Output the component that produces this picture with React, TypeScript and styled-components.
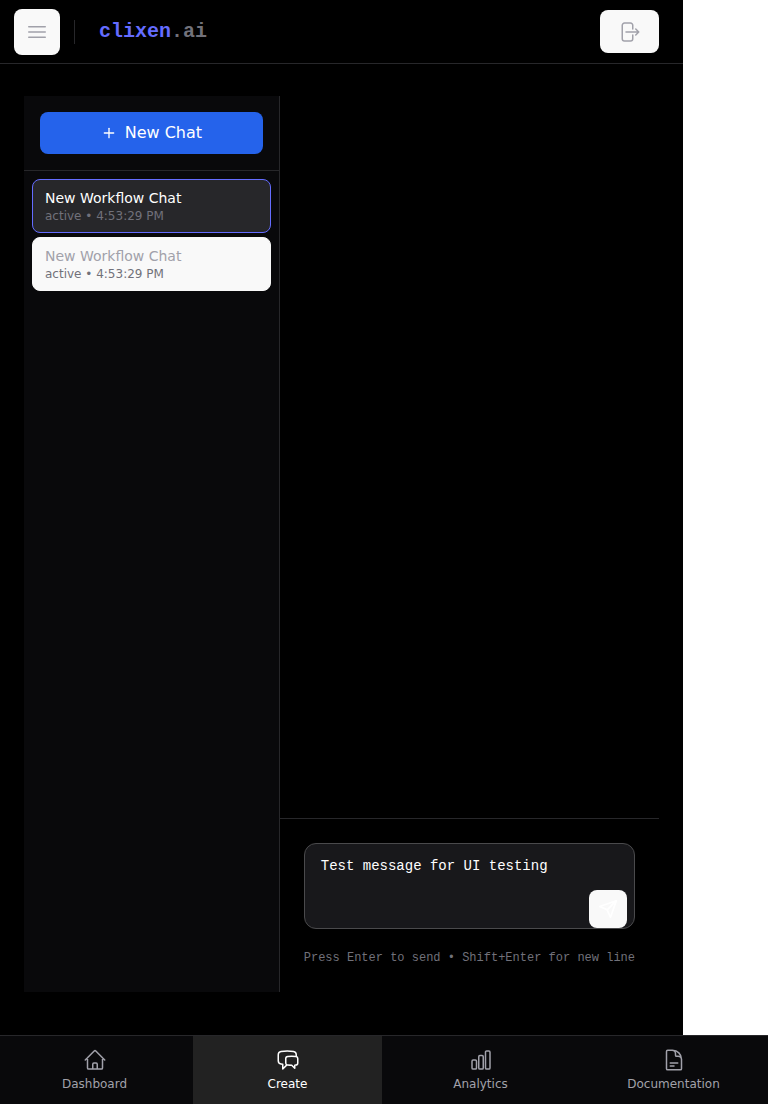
import React from 'react';
import styled, { createGlobalStyle } from 'styled-components';
import {
  HiOutlineArrowRightOnRectangle,
  HiOutlineBars3,
  HiOutlineChartBar,
  HiOutlineChatBubbleLeftRight,
  HiOutlineDocumentText,
  HiOutlineHome,
} from 'react-icons/hi2';
import { FiSend } from 'react-icons/fi';
import { Plus } from 'lucide-react';

const sans = `'DejaVu Sans', sans-serif`;
const mono = `'Liberation Mono', monospace`;

const GlobalStyle = createGlobalStyle`
  *, *::before, *::after { box-sizing: border-box; }
  body { margin: 0; background: #fff; font-family: ${sans}; }
  button { font: inherit; border: 0; margin: 0; padding: 0; cursor: pointer; }
  svg { display: block; flex: none; }
`;

const Screen = styled.div`
  display: flex;
  flex-direction: column;
  height: 1104px;
`;

const Workspace = styled.div`
  display: flex;
  flex-direction: column;
  flex: 1;
  width: 683px;
  background: #000;
`;

const Header = styled.header`
  display: flex;
  align-items: center;
  height: 64px;
  padding: 0 24px 0 14px;
  border-bottom: 1px solid #27272a;
`;

const IconButton = styled.button<{ $width: number; $height: number }>`
  display: flex;
  align-items: center;
  justify-content: center;
  width: ${(p) => p.$width}px;
  height: ${(p) => p.$height}px;
  border-radius: 8px;
  background: #f9f9f9;
  color: #a1a1aa;
`;

const LogoutButton = styled(IconButton)`
  padding-right: 1px;
`;

const Divider = styled.span`
  width: 1px;
  height: 24px;
  margin: 0 24px 0 14px;
  background: #27272a;
`;

const Logo = styled.div`
  flex: 1;
  font: bold 20px/28px ${mono};
  color: #646cff;
`;

const LogoSuffix = styled.span`
  color: #71717a;
`;

const Main = styled.main`
  display: flex;
  height: 896px;
  margin: 32px 24px 0;
`;

const Sidebar = styled.aside`
  width: 256px;
  background: #09090b;
  border-right: 1px solid #27272a;
`;

const SidebarTop = styled.div`
  height: 75px;
  padding: 16px;
  border-bottom: 1px solid #27272a;
`;

const NewChatButton = styled.button`
  display: flex;
  align-items: center;
  justify-content: center;
  gap: 8px;
  width: 100%;
  height: 42px;
  border-radius: 8px;
  background: #2563eb;
  color: #fff;
  font-size: 16px;
`;

const NewChatLabel = styled.span`
  padding-bottom: 2px;
`;

const ChatList = styled.div`
  display: flex;
  flex-direction: column;
  gap: 4px;
  padding: 8px;
`;

const ChatItem = styled.button<{ $active?: boolean }>`
  height: 54px;
  padding: 0 12px;
  text-align: left;
  border: 1px solid ${(p) => (p.$active ? '#646cff' : '#f9f9f9')};
  border-radius: 8px;
  background: ${(p) => (p.$active ? '#27272a' : '#f9f9f9')};
  color: ${(p) => (p.$active ? '#fff' : '#a1a1aa')};
`;

const ChatTitle = styled.div`
  font-size: 14px;
  line-height: 20px;
`;

const ChatMeta = styled.div`
  font-size: 12px;
  line-height: 16px;
  color: #71717a;
`;

const Conversation = styled.section`
  display: flex;
  flex-direction: column;
  justify-content: flex-end;
  flex: 1;
`;

const Composer = styled.div`
  height: 174px;
  padding: 24px;
  border-top: 1px solid #27272a;
`;

const InputBox = styled.div`
  position: relative;
  height: 86px;
`;

const MessageInput = styled.textarea`
  display: block;
  width: 100%;
  height: 100%;
  padding: 12px 48px 12px 16px;
  border: 1px solid #4a4a4c;
  border-radius: 12px;
  outline: 0;
  resize: none;
  background: #18181b;
  color: #fff;
  font: 14px/20px ${mono};
`;

const SendButton = styled(IconButton)`
  position: absolute;
  right: 8px;
  bottom: 1px;
  color: #fff;
`;

const Hint = styled.div`
  margin-top: 21px;
  font: 12px/16px ${mono};
  color: #71717a;
  white-space: nowrap;
`;

const BottomNav = styled.nav`
  display: grid;
  grid-template-columns: repeat(4, 1fr);
  gap: 4px;
  height: 69px;
  border-top: 1px solid #27272a;
  background: #09090b;
`;

const NavItem = styled.button<{ $active?: boolean }>`
  display: flex;
  flex-direction: column;
  align-items: center;
  gap: 4px;
  padding-top: 12px;
  background: ${(p) => (p.$active ? '#222' : 'transparent')};
  color: ${(p) => (p.$active ? '#fff' : '#a1a1aa')};
  font-size: 12px;
  line-height: 16px;
`;

const chats = [
  { title: 'New Workflow Chat', meta: 'active • 4:53:29 PM' },
  { title: 'New Workflow Chat', meta: 'active • 4:53:29 PM' },
];

const navItems = [
  { label: 'Dashboard', Icon: HiOutlineHome },
  { label: 'Create', Icon: HiOutlineChatBubbleLeftRight },
  { label: 'Analytics', Icon: HiOutlineChartBar },
  { label: 'Documentation', Icon: HiOutlineDocumentText },
];

export default function App() {
  return (
    <>
      <GlobalStyle />
      <Screen>
        <Workspace>
          <Header>
            <IconButton $width={46} $height={46}>
              <HiOutlineBars3 size={24} />
            </IconButton>
            <Divider />
            <Logo>
              clixen<LogoSuffix>.ai</LogoSuffix>
            </Logo>
            <LogoutButton $width={59} $height={43}>
              <HiOutlineArrowRightOnRectangle size={24} />
            </LogoutButton>
          </Header>
          <Main>
            <Sidebar>
              <SidebarTop>
                <NewChatButton>
                  <Plus size={16} />
                  <NewChatLabel>New Chat</NewChatLabel>
                </NewChatButton>
              </SidebarTop>
              <ChatList>
                {chats.map((chat, i) => (
                  <ChatItem key={i} $active={i === 0}>
                    <ChatTitle>{chat.title}</ChatTitle>
                    <ChatMeta>{chat.meta}</ChatMeta>
                  </ChatItem>
                ))}
              </ChatList>
            </Sidebar>
            <Conversation>
              <Composer>
                <InputBox>
                  <MessageInput defaultValue="Test message for UI testing" spellCheck={false} />
                  <SendButton $width={38} $height={38}>
                    <FiSend size={20} />
                  </SendButton>
                </InputBox>
                <Hint>Press Enter to send • Shift+Enter for new line</Hint>
              </Composer>
            </Conversation>
          </Main>
        </Workspace>
        <BottomNav>
          {navItems.map(({ label, Icon }) => (
            <NavItem key={label} $active={label === 'Create'}>
              <Icon size={24} />
              {label}
            </NavItem>
          ))}
        </BottomNav>
      </Screen>
    </>
  );
}
